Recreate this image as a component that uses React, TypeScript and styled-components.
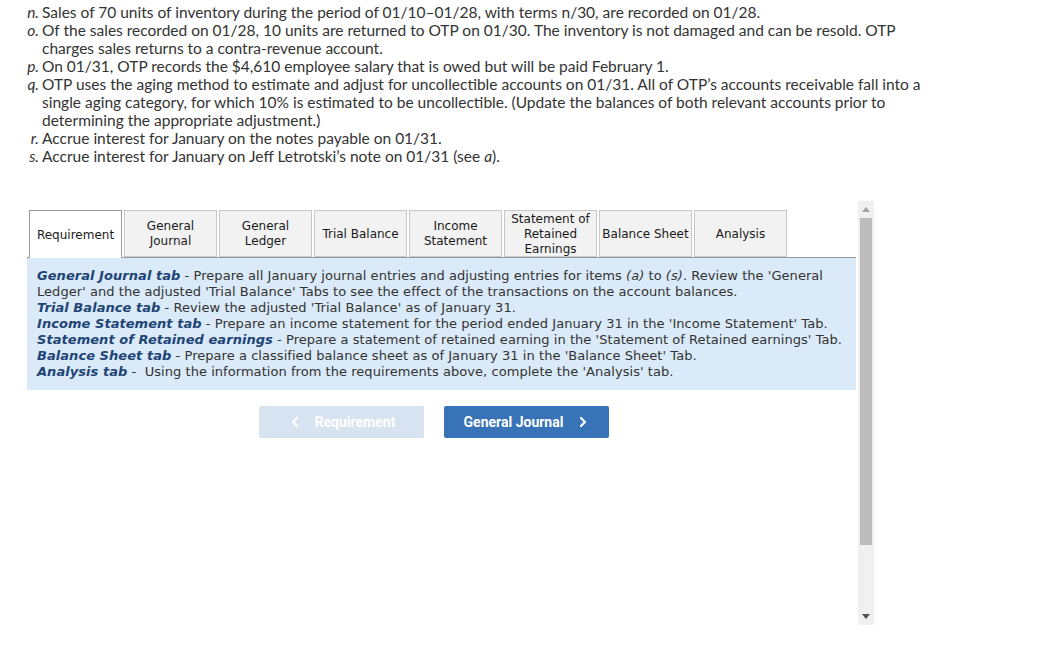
import * as React from "react";
import styled, { createGlobalStyle } from "styled-components";

const GlobalStyle = createGlobalStyle`
  html, body {
    margin: 0;
    padding: 0;
    background: #ffffff;
  }
  body {
    font-family: "Lato", "Liberation Sans", sans-serif;
    color: #333;
  }
`;

interface Item {
  label: string;
  text: React.ReactNode;
}

const items: Item[] = [
  {
    label: "n.",
    text: "Sales of 70 units of inventory during the period of 01/10–01/28, with terms n/30, are recorded on 01/28.",
  },
  {
    label: "o.",
    text: "Of the sales recorded on 01/28, 10 units are returned to OTP on 01/30. The inventory is not damaged and can be resold. OTP charges sales returns to a contra-revenue account.",
  },
  {
    label: "p.",
    text: "On 01/31, OTP records the $4,610 employee salary that is owed but will be paid February 1.",
  },
  {
    label: "q.",
    text: "OTP uses the aging method to estimate and adjust for uncollectible accounts on 01/31. All of OTP’s accounts receivable fall into a single aging category, for which 10% is estimated to be uncollectible. (Update the balances of both relevant accounts prior to determining the appropriate adjustment.)",
  },
  {
    label: "r.",
    text: "Accrue interest for January on the notes payable on 01/31.",
  },
  {
    label: "s.",
    text: (
      <>
        Accrue interest for January on Jeff Letrotski’s note on 01/31 (see <em>a</em>).
      </>
    ),
  },
];

const tabs = [
  "Requirement",
  "General Journal",
  "General Ledger",
  "Trial Balance",
  "Income Statement",
  "Statement of Retained Earnings",
  "Balance Sheet",
  "Analysis",
];

const tabLabels: Record<string, React.ReactNode> = {
  "General Journal": (
    <>
      General
      <br />
      Journal
    </>
  ),
  "General Ledger": (
    <>
      General
      <br />
      Ledger
    </>
  ),
  "Income Statement": (
    <>
      Income
      <br />
      Statement
    </>
  ),
  "Statement of Retained Earnings": (
    <>
      Statement of
      <br />
      Retained
      <br />
      Earnings
    </>
  ),
};

const ChevronLeft = () => (
  <svg width="10" height="12" viewBox="0 0 10 12" fill="none" stroke="currentColor" strokeWidth="2.2" strokeLinecap="round" strokeLinejoin="round">
    <polyline points="7 2 3 6 7 10" />
  </svg>
);

const ChevronRight = () => (
  <svg width="10" height="12" viewBox="0 0 10 12" fill="none" stroke="currentColor" strokeWidth="2.2" strokeLinecap="round" strokeLinejoin="round">
    <polyline points="3 2 7 6 3 10" />
  </svg>
);

export default function App() {
  const active = "Requirement";
  return (
    <>
      <GlobalStyle />
      <Page>
        <Questions>
          {items.map((it) => (
            <QItem key={it.label}>
              <QLabel>{it.label}</QLabel>
              <QText>{it.text}</QText>
            </QItem>
          ))}
        </Questions>

        <Widget>
          <Content>
            <TabRow>
              {tabs.map((t) => (
                <Tab key={t} $active={t === active}>
                  {tabLabels[t] ?? t}
                </Tab>
              ))}
            </TabRow>
            <Panel>
              <p>
                <b>General Journal tab</b> - Prepare all January journal entries and adjusting entries for items{" "}
                <i>(a)</i> to <i>(s)</i>. Review the 'General Ledger' and the adjusted 'Trial Balance' Tabs to see the
                effect of the transactions on the account balances.
              </p>
              <p>
                <b>Trial Balance tab</b> - Review the adjusted 'Trial Balance' as of January 31.
              </p>
              <p>
                <b>Income Statement tab</b> - Prepare an income statement for the period ended January 31 in the 'Income
                Statement' Tab.
              </p>
              <p>
                <b>Statement of Retained earnings</b> - Prepare a statement of retained earning in the 'Statement of
                Retained earnings' Tab.
              </p>
              <p>
                <b>Balance Sheet tab</b> - Prepare a classified balance sheet as of January 31 in the 'Balance Sheet' Tab.
              </p>
              <p>
                <b>Analysis tab</b> -&nbsp; Using the information from the requirements above, complete the 'Analysis' tab.
              </p>
            </Panel>
            <NavRow>
              <NavButton $variant="prev" disabled>
                <ChevronLeft />
                <span>Requirement</span>
              </NavButton>
              <NavButton $variant="next">
                <span>General Journal</span>
                <ChevronRight />
              </NavButton>
            </NavRow>
          </Content>
          <ScrollBar>
            <ScrollArrow $dark={false}>
              <svg width="8" height="5" viewBox="0 0 8 5">
                <polygon points="4 0 8 5 0 5" fill="currentColor" />
              </svg>
            </ScrollArrow>
            <ScrollTrack>
              <Thumb />
            </ScrollTrack>
            <ScrollArrow $dark>
              <svg width="8" height="5" viewBox="0 0 8 5">
                <polygon points="0 0 8 0 4 5" fill="currentColor" />
              </svg>
            </ScrollArrow>
          </ScrollBar>
        </Widget>
      </Page>
    </>
  );
}

const Page = styled.div`
  padding: 3px 0 0 26px;
  width: 1037px;
  box-sizing: border-box;
`;

const Questions = styled.div`
  display: flex;
  flex-direction: column;
  width: 922px;
  font-size: 15.5px;
  line-height: 18px;
  color: #333;
`;

const QItem = styled.div`
  display: grid;
  grid-template-columns: 14px 1fr;
  column-gap: 2px;
`;

const QLabel = styled.span`
  font-style: italic;
  text-align: right;
  padding-right: 1px;
`;

const QText = styled.span`
  & em {
    font-style: italic;
  }
`;

const Widget = styled.div`
  display: flex;
  align-items: flex-start;
  margin-top: 36px;
  margin-left: 1px;
  height: 424px;
`;

const Content = styled.div`
  width: 829px;
  padding-top: 9px;
  display: flex;
  flex-direction: column;
`;

const TabRow = styled.div`
  display: flex;
  gap: 2px;
  padding-left: 2px;
  border-bottom: 1px solid #999;
  height: 47px;
`;

const Tab = styled.div<{ $active: boolean }>`
  box-sizing: border-box;
  width: 93px;
  height: ${(p) => (p.$active ? "48px" : "47px")};
  display: flex;
  align-items: center;
  justify-content: center;
  text-align: center;
  font-family: "DejaVu Sans", Verdana, sans-serif;
  font-size: 12px;
  line-height: 15px;
  color: #1a1a1a;
  background: ${(p) => (p.$active ? "#ffffff" : "#f2f2f2")};
  border: 1px solid ${(p) => (p.$active ? "#999" : "#c8c8c8")};
  border-bottom: ${(p) => (p.$active ? "none" : "1px solid #c8c8c8")};
  padding-top: 1px;
  position: relative;
  z-index: ${(p) => (p.$active ? 1 : 0)};
`;

const Panel = styled.div`
  background: #daeaf8;
  padding: 10px 10px 10px;
  font-family: "DejaVu Sans", Verdana, sans-serif;
  font-size: 13px;
  letter-spacing: 0.05px;
  line-height: 16px;
  color: #333;

  & p {
    margin: 0;
  }
  & b {
    font-weight: bold;
    font-style: italic;
    color: #1e4476;
  }
  & i {
    font-style: italic;
  }
`;

const NavRow = styled.div`
  display: flex;
  justify-content: center;
  gap: 20px;
  margin-top: 16px;
  padding-right: 16px;
`;

const NavButton = styled.button<{ $variant: "prev" | "next" }>`
  height: 32px;
  width: 165px;
  display: flex;
  align-items: center;
  justify-content: center;
  gap: 15px;
  border: none;
  border-radius: 2px;
  font-family: "Roboto", "Liberation Sans", sans-serif;
  font-weight: bold;
  font-size: 14px;
  color: #ffffff;
  background: ${(p) => (p.$variant === "prev" ? "#d7e3f1" : "#3873b8")};
  padding: 0 0 0 ${(p) => (p.$variant === "prev" ? "3px" : "0")};
  cursor: ${(p) => (p.$variant === "prev" ? "default" : "pointer")};
`;

const ScrollBar = styled.div`
  margin-left: 2px;
  width: 16px;
  height: 424px;
  background: #f0f0f0;
  display: flex;
  flex-direction: column;
`;

const ScrollArrow = styled.div<{ $dark: boolean }>`
  height: 17px;
  display: flex;
  align-items: center;
  justify-content: center;
  color: ${(p) => (p.$dark ? "#505050" : "#a3a3a3")};
`;

const ScrollTrack = styled.div`
  flex: 1;
  display: flex;
  flex-direction: column;
`;

const Thumb = styled.div`
  margin: 0 2px;
  height: 327px;
  background: #bcbcbc;
`;
